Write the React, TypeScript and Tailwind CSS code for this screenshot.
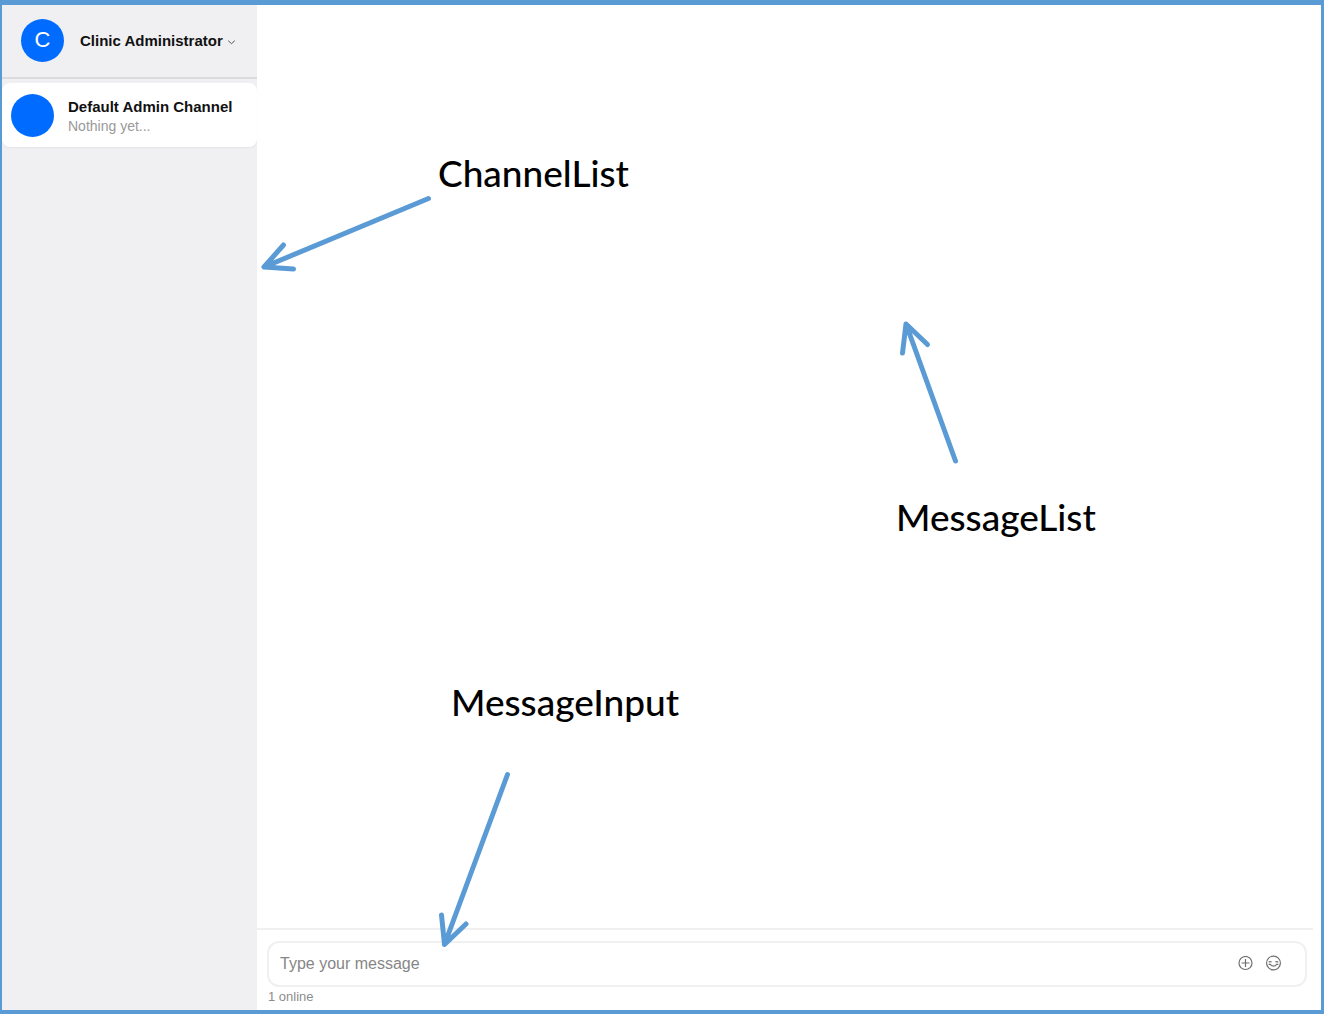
import React from "react";

function Avatar({ initial }: { initial?: string }) {
  return (
    <span className="flex size-[43px] shrink-0 items-center justify-center rounded-full bg-[#006cff] text-[22px] leading-none text-white">
      {initial}
    </span>
  );
}

function Sidebar() {
  return (
    <aside className="flex w-[255px] shrink-0 flex-col bg-[#f0f0f3]">
      <header className="flex h-[74px] items-center gap-4 border-b-2 border-[#dcdcdf] pr-4 pb-0.5 pl-[19px]">
        <Avatar initial="C" />
        <button
          type="button"
          className="flex items-center gap-1 pt-0.5 text-[15px] leading-5 font-bold whitespace-nowrap text-[#111]"
        >
          Clinic Administrator
          <svg className="size-2.5 text-[#555]" viewBox="0 0 10 10" fill="none" stroke="currentColor" aria-hidden="true">
            <path d="M1.2 4.7 4.5 7.7 7.8 4.7" />
          </svg>
        </button>
      </header>
      <nav aria-label="Channels" className="pt-1">
        <button
          type="button"
          className="flex h-16 w-full items-center gap-3.5 rounded-lg bg-white pl-[9px] text-left shadow-xs"
        >
          <Avatar />
          <span className="flex flex-col pt-0.5 whitespace-nowrap">
            <span className="text-[15px] leading-5 font-bold text-[#111]">Default Admin Channel</span>
            <span className="text-sm leading-[18px] text-[#999]">Nothing yet...</span>
          </span>
        </button>
      </nav>
    </aside>
  );
}

function MessageInput() {
  return (
    <form className="mr-2 border-t-2 border-[#f0f0f0] pt-[11px]" onSubmit={(e) => e.preventDefault()}>
      <div className="mr-1.5 ml-2.5 flex h-[46px] items-center gap-3 rounded-xl border-2 border-[#f0f0f0] pr-[23px] pl-[11px]">
        <input
          type="text"
          aria-label="Type your message"
          placeholder="Type your message"
          className="min-w-0 flex-1 bg-transparent text-base outline-none placeholder:text-[#868686]"
        />
        <button type="button" aria-label="Attach file">
          <svg className="size-4 text-[#707070]" viewBox="0 0 16 16" fill="none" stroke="currentColor" strokeWidth="1.2">
            <circle cx="7.5" cy="7" r="6.5" />
            <path d="M7.5 3v8M3.5 7h8" />
          </svg>
        </button>
        <button type="button" aria-label="Insert emoji">
          <svg className="size-4 overflow-visible text-[#707070]" viewBox="0 0 16 16" fill="none" stroke="currentColor" strokeWidth="1.2">
            <circle cx="7.5" cy="7" r="6.9" />
            <path d="M2.8 6.2Q4.2 4.9 5.6 6.1M9.4 6.1Q10.8 4.9 12.2 6.2M2.6 8.3H4.3Q7.5 12.1 10.7 8.3H12.4" />
          </svg>
        </button>
      </div>
      <p className="ml-[11px] h-[23px] text-[13px] leading-5 text-[#8c8c8c]">1 online</p>
    </form>
  );
}

function Annotations() {
  return (
    <div className="pointer-events-none absolute inset-0 font-[Lato,sans-serif] text-[37px] leading-[44px] font-medium text-black">
      <svg
        className="absolute top-0 left-0 h-[1014px] w-[1324px]"
        viewBox="0 0 1324 1014"
        fill="none"
        stroke="#5b9bd5"
        strokeWidth="5"
        strokeLinecap="round"
        strokeLinejoin="round"
        aria-hidden="true"
      >
        <path d="M428.5 198.5 264 267M283.5 245 264 267 293.5 269" />
        <path d="M955.5 461 906 324M902.5 353 906 324 927.5 344.5" />
        <path d="M507.5 774.5 444.5 944.5M441.5 915 444.5 944.5 466 924" />
      </svg>
      <span className="absolute top-[151px] left-[438px]">ChannelList</span>
      <span className="absolute top-[495px] left-[896px]">MessageList</span>
      <span className="absolute top-[680px] left-[451px]">MessageInput</span>
    </div>
  );
}

export default function App() {
  return (
    <div className="relative font-['Liberation_Sans',sans-serif]">
      <div className="flex min-h-screen border-t-[5px] border-r-[3px] border-b-4 border-l-2 border-[#5b9bd5] bg-white">
        <Sidebar />
        <main className="flex min-w-0 flex-1 flex-col">
          <section aria-label="Messages" className="flex-1" />
          <MessageInput />
        </main>
      </div>
      <Annotations />
    </div>
  );
}
